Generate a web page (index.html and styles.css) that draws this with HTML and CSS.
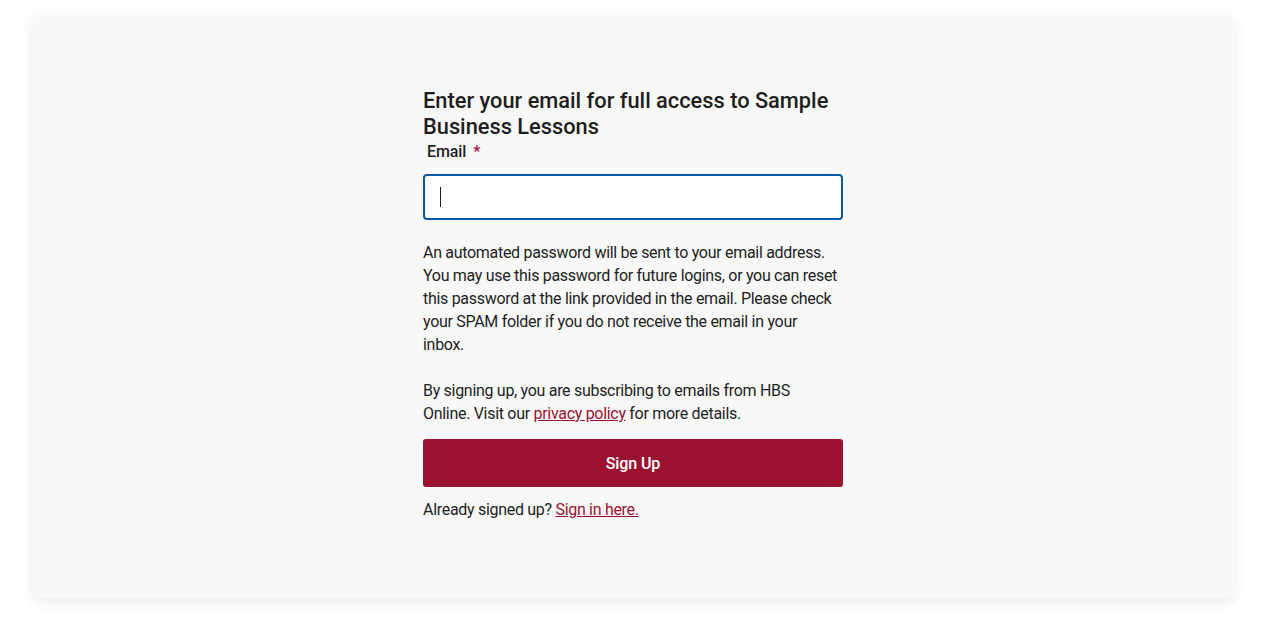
FILE: index.html
```html
<!DOCTYPE html>
<html lang="en">
<head>
<meta charset="utf-8">
<title>Sign up</title>
<link rel="stylesheet" href="styles.css">
</head>
<body>
<main class="card">
  <form class="form">
    <h1 class="title">Enter your email for full access to Sample Business Lessons</h1>
    <label class="label" for="email">Email <span class="req">*</span></label>
    <div class="input"><span class="caret"></span></div>
    <p class="text info">An automated password will be sent to your email address. You may use this password for future logins, or you can reset this password at the link provided in the email. Please check your SPAM folder if you do not receive the email in your inbox.</p>
    <p class="text consent">By signing up, you are subscribing to emails from HBS Online. Visit our <a href="#">privacy policy</a> for more details.</p>
    <button type="button" class="btn">Sign Up</button>
    <p class="text already">Already signed up? <a href="#">Sign in here.</a></p>
  </form>
</main>
</body>
</html>
```

FILE: styles.css
```css
html, body {
  margin: 0;
  background: #ffffff;
}
body {
  padding: 15px 31px 25px 33px;
  font-family: Roboto, "Liberation Sans", sans-serif;
  color: #1e1e1e;
}
.card {
  width: 1200px;
  height: 583px;
  box-sizing: border-box;
  background: #f8f8f8;
  border-radius: 3px;
  box-shadow: 0 3px 14px rgba(0, 0, 0, 0.09);
  display: flex;
  justify-content: center;
  padding-top: 73px;
}
.form {
  width: 420px;
  display: flex;
  flex-direction: column;
}
.title {
  margin: 0;
  font-size: 21.8px;
  line-height: 26px;
  font-weight: 500;
  letter-spacing: 0;
  color: #1e1e1e;
}
.label {
  margin: 0 0 10px 4px;
  font-size: 16px;
  line-height: 24px;
  font-weight: 500;
  letter-spacing: -0.1px;
}
.req {
  color: #a41034;
  margin-left: 3px;
}
.input {
  height: 46px;
  box-sizing: border-box;
  border: 2px solid #0c56a6;
  border-radius: 4px;
  background: #ffffff;
  display: flex;
  align-items: center;
  padding-left: 15px;
}
.caret {
  width: 1px;
  height: 20px;
  background: #1e1e1e;
}
.text {
  margin: 0;
  font-size: 16px;
  line-height: 23px;
  letter-spacing: -0.3px;
  color: #1e1e1e;
}
.info {
  margin-top: 21px;
  max-width: 415px;
}
.consent {
  margin-top: 23px;
  max-width: 400px;
}
.text a {
  color: #9b1230;
  text-decoration: underline;
}
.btn {
  margin-top: 14px;
  height: 48px;
  border: 0;
  border-radius: 3px;
  background: #9b1230;
  color: #ffffff;
  font-family: inherit;
  font-size: 16px;
  font-weight: 500;
  letter-spacing: -0.1px;
}
.already {
  margin-top: 11px;
}
```
